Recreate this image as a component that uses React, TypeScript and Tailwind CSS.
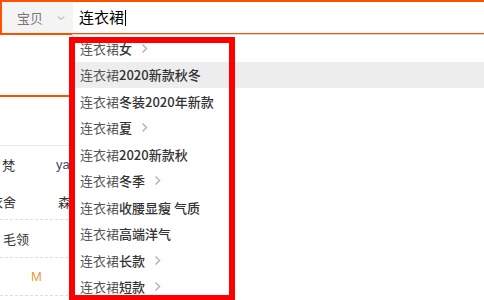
import React from "react";

type Suggestion = { rest: string; more?: boolean; active?: boolean };

const suggestions: Suggestion[] = [
  { rest: "女", more: true },
  { rest: "2020新款秋冬", active: true },
  { rest: "冬装2020年新款" },
  { rest: "夏", more: true },
  { rest: "2020新款秋" },
  { rest: "冬季", more: true },
  { rest: "收腰显瘦 气质" },
  { rest: "高端洋气" },
  { rest: "长款", more: true },
  { rest: "短款", more: true },
];

const font = { fontFamily: '"Noto Sans CJK SC", "Noto Sans", sans-serif' };

function Chevron() {
  return (
    <svg width="7" height="11" viewBox="0 0 7 11" className="ml-[9px] shrink-0">
      <polyline points="1.5,1.5 5.5,5.5 1.5,9.5" fill="none" stroke="#b8b8b8" strokeWidth="1.6" />
    </svg>
  );
}

export default function App() {
  const q = "连衣裙";
  return (
    <div className="relative h-[300px] w-[484px] overflow-hidden bg-white" style={font}>
      {/* search bar */}
      <div className="flex h-[35px] w-[560px] border-2 border-r-0 border-[#ff5000]">
        <div className="flex w-[71px] items-center bg-[#f4f4f4] pl-[15px] text-[13px] text-[#777]">
          <span>宝贝</span>
          <svg width="8" height="6" viewBox="0 0 8 6" className="ml-[14px]">
            <polyline points="1,1.5 4,4.5 7,1.5" fill="none" stroke="#999" strokeWidth="1" />
          </svg>
        </div>
        <div className="flex flex-1 items-center bg-white pl-[6px] text-[15px] text-black">
          <span>{q}</span>
          <span className="ml-px h-[16px] w-px bg-black" />
        </div>
      </div>

      {/* page behind */}
      <div className="mt-[60px] h-[2px] w-[484px] bg-[#ff5000]" />
      <div className="mt-[48px] h-px w-[484px] bg-[#e8e8e8]" />
      <div className="flex h-[38px] items-center text-[13px] text-[#333]">
        <span className="ml-[2px] w-[54px]">梵</span>
        <span className="text-[#3c4a6e]" style={{ fontFamily: '"Liberation Sans", sans-serif' }}>yamix</span>
      </div>
      <div className="flex h-[36px] items-center border-b border-dashed border-[#ddd] text-[13px] text-[#333]">
        <span className="ml-[-10px] w-[68px]">衣舍</span>
        <span>森马</span>
      </div>
      <div className="flex h-[38px] items-center border-b border-dashed border-[#ddd] text-[13px] text-[#333]">
        <span className="ml-[3px]">毛领</span>
      </div>
      <div
        className="flex h-[38px] items-center border-b border-dashed border-[#ddd] text-[13px] text-[#e89a3c]"
        style={{ fontFamily: '"Liberation Sans", sans-serif' }}
      >
        <span className="ml-[31px]">M</span>
      </div>

      {/* suggestion dropdown */}
      <div className="absolute left-[72px] top-[34px] w-[440px] border-t-[1.5px] border-l border-[#d9d9d9] bg-white">
        {suggestions.map((s, i) => (
          <div
            key={i}
            className={`flex h-[26.5px] items-center pl-[7px] text-[13px] ${s.active ? "bg-[#ededed]" : ""}`}
          >
            <span className="text-[#555]">{q}</span>
            <span className="font-medium text-[#333]">{s.rest}</span>
            {s.more && <Chevron />}
          </div>
        ))}
      </div>

      {/* annotation box */}
      <div className="absolute left-[69px] top-[37px] h-[264px] w-[166px] border-[6px] border-[#ff0000]" />
    </div>
  );
}
